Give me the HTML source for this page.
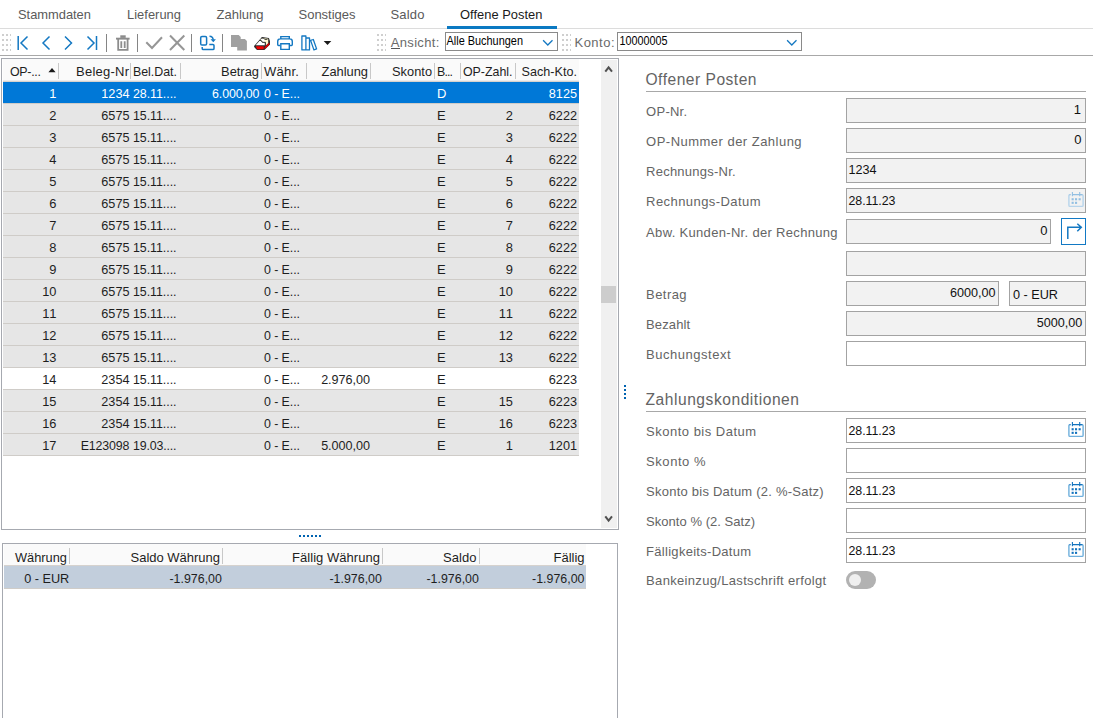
<!DOCTYPE html><html lang="de"><head><meta charset="utf-8"><title>Offene Posten</title><style>
html,body{margin:0;padding:0;background:#fff;}
body{width:1093px;height:718px;overflow:hidden;position:relative;font-family:"Liberation Sans", sans-serif;}
.a{position:absolute;display:block;}
.t{position:absolute;white-space:nowrap;line-height:20px;height:20px;}
</style></head><body>
<div class="a" style="left:0px;top:28px;width:1093px;height:1px;background:#dcdcdc;"></div>
<div class="a" style="left:447px;top:26px;width:110px;height:3px;background:#0b79c2;"></div>
<div class="a" style="left:0px;top:55px;width:1093px;height:1px;background:#a8a8a8;"></div>
<svg class="a" style="left:0;top:29px" width="1093" height="26" viewBox="0 29 1093 26"><rect x="2" y="34" width="2" height="2" fill="#cfcfcf"/><rect x="6" y="34" width="2" height="2" fill="#cfcfcf"/><rect x="10" y="34" width="1" height="2" fill="#cfcfcf"/><rect x="2" y="39" width="2" height="2" fill="#cfcfcf"/><rect x="6" y="39" width="2" height="2" fill="#cfcfcf"/><rect x="10" y="39" width="1" height="2" fill="#cfcfcf"/><rect x="2" y="44" width="2" height="2" fill="#cfcfcf"/><rect x="6" y="44" width="2" height="2" fill="#cfcfcf"/><rect x="10" y="44" width="1" height="2" fill="#cfcfcf"/><rect x="2" y="49" width="2" height="2" fill="#cfcfcf"/><rect x="6" y="49" width="2" height="2" fill="#cfcfcf"/><rect x="10" y="49" width="1" height="2" fill="#cfcfcf"/><rect x="377" y="34" width="2" height="2" fill="#cfcfcf"/><rect x="381" y="34" width="2" height="2" fill="#cfcfcf"/><rect x="385" y="34" width="1" height="2" fill="#cfcfcf"/><rect x="377" y="39" width="2" height="2" fill="#cfcfcf"/><rect x="381" y="39" width="2" height="2" fill="#cfcfcf"/><rect x="385" y="39" width="1" height="2" fill="#cfcfcf"/><rect x="377" y="44" width="2" height="2" fill="#cfcfcf"/><rect x="381" y="44" width="2" height="2" fill="#cfcfcf"/><rect x="385" y="44" width="1" height="2" fill="#cfcfcf"/><rect x="377" y="49" width="2" height="2" fill="#cfcfcf"/><rect x="381" y="49" width="2" height="2" fill="#cfcfcf"/><rect x="385" y="49" width="1" height="2" fill="#cfcfcf"/><rect x="562" y="34" width="2" height="2" fill="#cfcfcf"/><rect x="566" y="34" width="2" height="2" fill="#cfcfcf"/><rect x="570" y="34" width="1" height="2" fill="#cfcfcf"/><rect x="562" y="39" width="2" height="2" fill="#cfcfcf"/><rect x="566" y="39" width="2" height="2" fill="#cfcfcf"/><rect x="570" y="39" width="1" height="2" fill="#cfcfcf"/><rect x="562" y="44" width="2" height="2" fill="#cfcfcf"/><rect x="566" y="44" width="2" height="2" fill="#cfcfcf"/><rect x="570" y="44" width="1" height="2" fill="#cfcfcf"/><rect x="562" y="49" width="2" height="2" fill="#cfcfcf"/><rect x="566" y="49" width="2" height="2" fill="#cfcfcf"/><rect x="570" y="49" width="1" height="2" fill="#cfcfcf"/><path d="M18.2 36V50 M27.5 36.5L21 43L27.5 49.5" stroke="#1478c2" stroke-width="1.5" fill="none"/><path d="M49.5 36.5L43 43L49.5 49.5" stroke="#1478c2" stroke-width="1.5" fill="none"/><path d="M65 36.5L71.5 43L65 49.5" stroke="#1478c2" stroke-width="1.5" fill="none"/><path d="M87.5 36.5L94 43L87.5 49.5 M96.5 36V50" stroke="#1478c2" stroke-width="1.5" fill="none"/><rect x="106" y="34" width="1" height="18" fill="#858585"/><rect x="137" y="34" width="1" height="18" fill="#858585"/><rect x="191" y="34" width="1" height="18" fill="#858585"/><rect x="222" y="34" width="1" height="18" fill="#858585"/><rect x="116" y="37.7" width="13.6" height="1.9" fill="#8c8c8c"/><rect x="120.3" y="35.3" width="5.4" height="2.6" fill="#8c8c8c"/><path d="M118.2 39V49.8H127.6V39 M121.3 41.2V48 M124.7 41.2V48" stroke="#8c8c8c" stroke-width="1.8" fill="none"/><path d="M146.3 42.3L152 48L162 37.3" stroke="#969696" stroke-width="2" fill="none"/><path d="M170 35.5L184.3 50 M184.3 35.5L170 50" stroke="#969696" stroke-width="2" fill="none"/><rect x="200.7" y="36.4" width="5.9" height="8.6" rx="1.3" stroke="#1478c2" stroke-width="1.5" fill="none"/><path d="M202.2 47V48.5Q202.2 49.6 203.3 49.6H212.9Q214 49.6 214 48.5V45.5Q214 44.4 212.9 44.4H209.3 M209.5 36.2Q213 36.3 213.2 39.8" stroke="#1478c2" stroke-width="1.5" fill="none"/><path d="M210.5 39.3H215.9L213.3 42.2Z" fill="#1478c2"/><path d="M231 35H238.7L240.7 37V47H231Z" fill="#a0a0a0"/><path d="M237.2 39H244.9L246.9 41V50.6H237.2Z" fill="#a0a0a0"/><path d="M254.1 46L262 36.9L268.9 38L270 41.3V44.6L264.4 50H257L254.1 47Z" fill="#2b2b2b"/><path d="M262.2 37.9L268.2 38.8V43.2L265.7 45.4V42.3H262.7L261.3 40.5L259.9 40.3Z" fill="#fff8cc"/><path d="M260.6 39.6L261.6 38.5L263.7 38.7L264.6 39.9V41.9H263L261.6 40.1Z" fill="#ffffff"/><path d="M255.7 45.3L259.6 40.8L261 41L262.4 42.7H264.9V45.3Z" fill="#ffffff"/><path d="M261.1 38.2H263.8L264.8 39.5H267.4" stroke="#2b2b2b" stroke-width="0.8" fill="none"/><path d="M259.4 40.4L261.2 40.5L262.6 42.3H265.3V45.4" stroke="#2b2b2b" stroke-width="0.8" fill="none"/><path d="M255.8 46.2H263.7V49.2H257.2Z" fill="#f40000"/><path d="M264.7 46.9L269.3 42.6V44.7L264.7 49.3Z" fill="#e00000"/><path d="M280.8 38.9V36.6H289.3V38.9 M280 45.5H278.6Q277.7 45.5 277.7 44.6V41.5Q277.7 38.9 280.3 38.9H289.7Q292.3 38.9 292.3 41.5V44.6Q292.3 45.5 291.4 45.5H290 M280.8 43.8H289.3V49.4H280.8Z" stroke="#1478c2" stroke-width="1.4" fill="none"/><path d="M301.9 36H305.9V49.9H301.9Z M305.9 38H309.5V49.9H305.9 M310.6 40.4L313.3 39.5L316.6 48.9L313.9 49.9Z" stroke="#1478c2" stroke-width="1.3" stroke-linejoin="round" fill="none"/><path d="M323.7 40.9H331.3L327.5 45Z" fill="#1a1a1a"/></svg>
<div class="a" style="left:391px;top:48px;width:9px;height:1px;background:#555;"></div>
<div class="a" style="left:445px;top:32px;width:113px;height:19px;background:#fff;border:1px solid #8a8a8a;box-sizing:border-box;"></div>
<svg class="a" style="left:541px;top:38px" width="14" height="10"><path d="M2.1 2.3L6.8 7L11.5 2.3" stroke="#1478c2" stroke-width="1.3" fill="none"/></svg>
<div class="a" style="left:617px;top:32px;width:185px;height:19px;background:#fff;border:1px solid #8a8a8a;box-sizing:border-box;"></div>
<svg class="a" style="left:785.4px;top:38px" width="14" height="10"><path d="M2.1 2.3L6.8 7L11.5 2.3" stroke="#1478c2" stroke-width="1.3" fill="none"/></svg>
<div class="a" style="left:1px;top:58px;width:618px;height:472px;background:#fff;border:1px solid #a6a9b0;box-sizing:border-box;"></div>
<div class="a" style="left:3px;top:59px;width:576px;height:21px;background:#fafafa;"></div>
<div class="a" style="left:3px;top:80px;width:576px;height:1px;background:#ececec;"></div>
<div class="a" style="left:3px;top:81px;width:576px;height:1px;background:#d6d2ce;"></div>
<div class="a" style="left:601px;top:60px;width:16px;height:468px;background:#f0f0f0;"></div>
<div class="a" style="left:601px;top:286px;width:15px;height:17px;background:#cdcdcd;"></div>
<svg class="a" style="left:601px;top:60px" width="16" height="17"><path d="M4.3 11.6L7.6 7.3L11 11.6" stroke="#505050" stroke-width="2" fill="none"/></svg>
<svg class="a" style="left:601px;top:511px" width="16" height="17"><path d="M4.3 5.4L7.6 9.7L11 5.4" stroke="#505050" stroke-width="2" fill="none"/></svg>
<div class="a" style="left:58px;top:63px;width:1px;height:16px;background:#c8c8c8;"></div>
<div class="a" style="left:130px;top:63px;width:1px;height:16px;background:#c8c8c8;"></div>
<div class="a" style="left:180px;top:63px;width:1px;height:16px;background:#c8c8c8;"></div>
<div class="a" style="left:261px;top:63px;width:1px;height:16px;background:#c8c8c8;"></div>
<div class="a" style="left:306px;top:63px;width:1px;height:16px;background:#c8c8c8;"></div>
<div class="a" style="left:370px;top:63px;width:1px;height:16px;background:#c8c8c8;"></div>
<div class="a" style="left:434px;top:63px;width:1px;height:16px;background:#c8c8c8;"></div>
<div class="a" style="left:460px;top:63px;width:1px;height:16px;background:#c8c8c8;"></div>
<div class="a" style="left:515px;top:63px;width:1px;height:16px;background:#c8c8c8;"></div>
<svg class="a" style="left:45.6px;top:66.4px" width="12" height="8"><path d="M2.4 6.2L6 2L9.6 6.2Z" fill="#1a1a1a"/></svg>
<div class="a" style="left:3px;top:82px;width:576px;height:22px;background:#0078d7;"></div>
<div class="a" style="left:3px;top:103px;width:576px;height:1px;background:#cfccc8;"></div>
<div class="a" style="left:3px;top:104px;width:576px;height:22px;background:#e6e6e6;"></div>
<div class="a" style="left:3px;top:125px;width:576px;height:1px;background:#cfccc8;"></div>
<div class="a" style="left:3px;top:126px;width:576px;height:22px;background:#e6e6e6;"></div>
<div class="a" style="left:3px;top:147px;width:576px;height:1px;background:#cfccc8;"></div>
<div class="a" style="left:3px;top:148px;width:576px;height:22px;background:#e6e6e6;"></div>
<div class="a" style="left:3px;top:169px;width:576px;height:1px;background:#cfccc8;"></div>
<div class="a" style="left:3px;top:170px;width:576px;height:22px;background:#e6e6e6;"></div>
<div class="a" style="left:3px;top:191px;width:576px;height:1px;background:#cfccc8;"></div>
<div class="a" style="left:3px;top:192px;width:576px;height:22px;background:#e6e6e6;"></div>
<div class="a" style="left:3px;top:213px;width:576px;height:1px;background:#cfccc8;"></div>
<div class="a" style="left:3px;top:214px;width:576px;height:22px;background:#e6e6e6;"></div>
<div class="a" style="left:3px;top:235px;width:576px;height:1px;background:#cfccc8;"></div>
<div class="a" style="left:3px;top:236px;width:576px;height:22px;background:#e6e6e6;"></div>
<div class="a" style="left:3px;top:257px;width:576px;height:1px;background:#cfccc8;"></div>
<div class="a" style="left:3px;top:258px;width:576px;height:22px;background:#e6e6e6;"></div>
<div class="a" style="left:3px;top:279px;width:576px;height:1px;background:#cfccc8;"></div>
<div class="a" style="left:3px;top:280px;width:576px;height:22px;background:#e6e6e6;"></div>
<div class="a" style="left:3px;top:301px;width:576px;height:1px;background:#cfccc8;"></div>
<div class="a" style="left:3px;top:302px;width:576px;height:22px;background:#e6e6e6;"></div>
<div class="a" style="left:3px;top:323px;width:576px;height:1px;background:#cfccc8;"></div>
<div class="a" style="left:3px;top:324px;width:576px;height:22px;background:#e6e6e6;"></div>
<div class="a" style="left:3px;top:345px;width:576px;height:1px;background:#cfccc8;"></div>
<div class="a" style="left:3px;top:346px;width:576px;height:22px;background:#e6e6e6;"></div>
<div class="a" style="left:3px;top:367px;width:576px;height:1px;background:#cfccc8;"></div>
<div class="a" style="left:3px;top:368px;width:576px;height:22px;background:#ffffff;"></div>
<div class="a" style="left:3px;top:389px;width:576px;height:1px;background:#cfccc8;"></div>
<div class="a" style="left:3px;top:390px;width:576px;height:22px;background:#e6e6e6;"></div>
<div class="a" style="left:3px;top:411px;width:576px;height:1px;background:#cfccc8;"></div>
<div class="a" style="left:3px;top:412px;width:576px;height:22px;background:#e6e6e6;"></div>
<div class="a" style="left:3px;top:433px;width:576px;height:1px;background:#cfccc8;"></div>
<div class="a" style="left:3px;top:434px;width:576px;height:22px;background:#e6e6e6;"></div>
<div class="a" style="left:3px;top:455px;width:576px;height:1px;background:#cfccc8;"></div>
<svg class="a" style="left:298px;top:534px" width="26" height="4"><rect x="1" y="1" width="2" height="2" fill="#0063b1"/><rect x="5" y="1" width="2" height="2" fill="#0063b1"/><rect x="9" y="1" width="2" height="2" fill="#0063b1"/><rect x="13" y="1" width="2" height="2" fill="#0063b1"/><rect x="17" y="1" width="2" height="2" fill="#0063b1"/><rect x="21" y="1" width="2" height="2" fill="#0063b1"/></svg>
<svg class="a" style="left:623px;top:384px" width="4" height="16"><rect x="1" y="1" width="2" height="2" fill="#0063b1"/><rect x="1" y="5" width="2" height="2" fill="#0063b1"/><rect x="1" y="9" width="2" height="2" fill="#0063b1"/><rect x="1" y="13" width="2" height="2" fill="#0063b1"/></svg>
<div class="a" style="left:2px;top:543px;width:616px;height:175px;background:#fff;border:1px solid #a6a9b0;box-sizing:border-box;border-bottom:none;"></div>
<div class="a" style="left:4px;top:544px;width:582px;height:21px;background:#fafafa;"></div>
<div class="a" style="left:4px;top:565px;width:582px;height:1px;background:#d6d2ce;"></div>
<div class="a" style="left:69px;top:548px;width:1px;height:16px;background:#c8c8c8;"></div>
<div class="a" style="left:222px;top:548px;width:1px;height:16px;background:#c8c8c8;"></div>
<div class="a" style="left:382px;top:548px;width:1px;height:16px;background:#c8c8c8;"></div>
<div class="a" style="left:479px;top:548px;width:1px;height:16px;background:#c8c8c8;"></div>
<div class="a" style="left:4px;top:566px;width:582px;height:22px;background:#c2cedc;"></div>
<div class="a" style="left:4px;top:588px;width:582px;height:1px;background:#cfccc8;"></div>
<div class="a" style="left:646px;top:91px;width:440px;height:1px;background:#a8a8a8;"></div>
<div class="a" style="left:646px;top:411px;width:440px;height:1px;background:#a8a8a8;"></div>
<div class="a" style="left:846px;top:98px;width:240px;height:25px;background:#f2f2f2;border:1px solid #a3a3a3;box-sizing:border-box;"></div>
<div class="a" style="left:846px;top:128px;width:240px;height:25px;background:#f2f2f2;border:1px solid #a3a3a3;box-sizing:border-box;"></div>
<div class="a" style="left:846px;top:158px;width:240px;height:25px;background:#f2f2f2;border:1px solid #a3a3a3;box-sizing:border-box;"></div>
<div class="a" style="left:846px;top:188px;width:240px;height:25px;background:#f2f2f2;border:1px solid #a3a3a3;box-sizing:border-box;"></div>
<div class="a" style="left:846px;top:219px;width:205px;height:25px;background:#f2f2f2;border:1px solid #a3a3a3;box-sizing:border-box;"></div>
<div class="a" style="left:846px;top:251px;width:240px;height:25px;background:#f2f2f2;border:1px solid #a3a3a3;box-sizing:border-box;"></div>
<div class="a" style="left:846px;top:281px;width:153px;height:25px;background:#f2f2f2;border:1px solid #a3a3a3;box-sizing:border-box;"></div>
<div class="a" style="left:1009px;top:281px;width:77px;height:25px;background:#f2f2f2;border:1px solid #a3a3a3;box-sizing:border-box;"></div>
<div class="a" style="left:846px;top:311px;width:240px;height:25px;background:#f2f2f2;border:1px solid #a3a3a3;box-sizing:border-box;"></div>
<div class="a" style="left:846px;top:341px;width:240px;height:25px;background:#ffffff;border:1px solid #a3a3a3;box-sizing:border-box;"></div>
<div class="a" style="left:846px;top:418px;width:240px;height:25px;background:#ffffff;border:1px solid #a3a3a3;box-sizing:border-box;"></div>
<div class="a" style="left:846px;top:448px;width:240px;height:25px;background:#ffffff;border:1px solid #a3a3a3;box-sizing:border-box;"></div>
<div class="a" style="left:846px;top:478px;width:240px;height:25px;background:#ffffff;border:1px solid #a3a3a3;box-sizing:border-box;"></div>
<div class="a" style="left:846px;top:508px;width:240px;height:25px;background:#ffffff;border:1px solid #a3a3a3;box-sizing:border-box;"></div>
<div class="a" style="left:846px;top:538px;width:240px;height:25px;background:#ffffff;border:1px solid #a3a3a3;box-sizing:border-box;"></div>
<div class="a" style="left:1061px;top:218px;width:25px;height:27px;background:#fff;border:1px solid #1279c4;box-sizing:border-box;"></div>
<svg class="a" style="left:1061px;top:218px" width="25" height="27"><path d="M6.8 21V9.3H20 M16.3 5.7L20.3 9.3L16.3 13.2" stroke="#1478c2" stroke-width="1.5" fill="none"/></svg>
<svg class="a" style="left:1067px;top:191px" width="18" height="17"><path d="M3.5 3.6H3Q1.9 3.6 1.9 4.8V14.2Q1.9 15.4 3 15.4H15Q16.1 15.4 16.1 14.2V4.8Q16.1 3.6 15 3.6H13" stroke="#b6d4eb" stroke-width="1.4" fill="none"/><path d="M5.4 1V5.2 M12.7 1V5.2 M5.4 3.6H12.2 M2.6 3.6H3.6 M12.7 3.6H15.4" stroke="#92bfe2" stroke-width="1.1" fill="none"/><rect x="4.6" y="7.2" width="2.1" height="2.1" fill="#92bfe2"/><rect x="8" y="7.2" width="2.1" height="2.1" fill="#92bfe2"/><rect x="11.6" y="7.2" width="2.1" height="2.1" fill="#92bfe2"/><rect x="4.6" y="10.8" width="2.1" height="2.1" fill="#92bfe2"/><rect x="8" y="10.8" width="2.1" height="2.1" fill="#92bfe2"/></svg>
<svg class="a" style="left:1067px;top:421px" width="18" height="17"><path d="M3.5 3.6H3Q1.9 3.6 1.9 4.8V14.2Q1.9 15.4 3 15.4H15Q16.1 15.4 16.1 14.2V4.8Q16.1 3.6 15 3.6H13" stroke="#6fb0dd" stroke-width="1.4" fill="none"/><path d="M5.4 1V5.2 M12.7 1V5.2 M5.4 3.6H12.2 M2.6 3.6H3.6 M12.7 3.6H15.4" stroke="#1373be" stroke-width="1.1" fill="none"/><rect x="4.6" y="7.2" width="2.1" height="2.1" fill="#1373be"/><rect x="8" y="7.2" width="2.1" height="2.1" fill="#1373be"/><rect x="11.6" y="7.2" width="2.1" height="2.1" fill="#1373be"/><rect x="4.6" y="10.8" width="2.1" height="2.1" fill="#1373be"/><rect x="8" y="10.8" width="2.1" height="2.1" fill="#1373be"/></svg>
<svg class="a" style="left:1067px;top:481px" width="18" height="17"><path d="M3.5 3.6H3Q1.9 3.6 1.9 4.8V14.2Q1.9 15.4 3 15.4H15Q16.1 15.4 16.1 14.2V4.8Q16.1 3.6 15 3.6H13" stroke="#6fb0dd" stroke-width="1.4" fill="none"/><path d="M5.4 1V5.2 M12.7 1V5.2 M5.4 3.6H12.2 M2.6 3.6H3.6 M12.7 3.6H15.4" stroke="#1373be" stroke-width="1.1" fill="none"/><rect x="4.6" y="7.2" width="2.1" height="2.1" fill="#1373be"/><rect x="8" y="7.2" width="2.1" height="2.1" fill="#1373be"/><rect x="11.6" y="7.2" width="2.1" height="2.1" fill="#1373be"/><rect x="4.6" y="10.8" width="2.1" height="2.1" fill="#1373be"/><rect x="8" y="10.8" width="2.1" height="2.1" fill="#1373be"/></svg>
<svg class="a" style="left:1067px;top:541px" width="18" height="17"><path d="M3.5 3.6H3Q1.9 3.6 1.9 4.8V14.2Q1.9 15.4 3 15.4H15Q16.1 15.4 16.1 14.2V4.8Q16.1 3.6 15 3.6H13" stroke="#6fb0dd" stroke-width="1.4" fill="none"/><path d="M5.4 1V5.2 M12.7 1V5.2 M5.4 3.6H12.2 M2.6 3.6H3.6 M12.7 3.6H15.4" stroke="#1373be" stroke-width="1.1" fill="none"/><rect x="4.6" y="7.2" width="2.1" height="2.1" fill="#1373be"/><rect x="8" y="7.2" width="2.1" height="2.1" fill="#1373be"/><rect x="11.6" y="7.2" width="2.1" height="2.1" fill="#1373be"/><rect x="4.6" y="10.8" width="2.1" height="2.1" fill="#1373be"/><rect x="8" y="10.8" width="2.1" height="2.1" fill="#1373be"/></svg>
<div class="a" style="left:846px;top:571px;width:30px;height:18px;background:#b2b2b2;border-radius:9px;"></div>
<div class="a" style="left:849px;top:574px;width:12px;height:12px;background:#efefef;border-radius:6px;"></div>
<span class="t" id="t0" style="top:5.00px;font-size:12.9px;color:#5a5a5a;letter-spacing:-0.015px;left:18.00px;">Stammdaten</span>
<span class="t" id="t1" style="top:5.00px;font-size:12.9px;color:#5a5a5a;letter-spacing:0.025px;left:127.00px;">Lieferung</span>
<span class="t" id="t2" style="top:5.00px;font-size:13.0px;color:#5a5a5a;letter-spacing:0.003px;left:216.50px;">Zahlung</span>
<span class="t" id="t3" style="top:5.00px;font-size:13.0px;color:#5a5a5a;letter-spacing:-0.012px;left:298.50px;">Sonstiges</span>
<span class="t" id="t4" style="top:5.00px;font-size:13.0px;color:#5a5a5a;letter-spacing:0.188px;left:390.50px;">Saldo</span>
<span class="t" id="t5" style="top:5.00px;font-size:12.9px;color:#1a1a1a;letter-spacing:0.022px;left:460.00px;">Offene Posten</span>
<span class="t" id="t6" style="top:33.00px;font-size:13.0px;color:#6a6a6a;letter-spacing:0.321px;left:390.80px;">Ansicht:</span>
<span class="t" id="t7" style="top:33.00px;font-size:13.0px;color:#6a6a6a;letter-spacing:0.481px;left:574.50px;">Konto:</span>
<span class="t" id="t8" style="top:31.00px;font-size:10.9px;color:#000;letter-spacing:0.011px;left:446.50px;transform:scaleY(1.12);transform-origin:0 14px;">Alle Buchungen</span>
<span class="t" id="t9" style="top:31.00px;font-size:10.8px;color:#000;letter-spacing:-0.009px;left:619.50px;transform:scaleY(1.12);transform-origin:0 14px;">10000005</span>
<span class="t" id="t10" style="top:62.00px;font-size:12.4px;color:#1e1e1e;letter-spacing:-0.277px;left:10.00px;">OP-...</span>
<span class="t" id="t11" style="top:62.00px;font-size:13.0px;color:#1e1e1e;letter-spacing:0.243px;right:963.76px;">Beleg-Nr</span>
<span class="t" id="t12" style="top:62.00px;font-size:12.4px;color:#1e1e1e;letter-spacing:-0.016px;left:133.00px;">Bel.Dat.</span>
<span class="t" id="t13" style="top:62.00px;font-size:12.9px;color:#1e1e1e;letter-spacing:-0.004px;right:834.00px;">Betrag</span>
<span class="t" id="t14" style="top:62.00px;font-size:13.0px;color:#1e1e1e;letter-spacing:0.258px;left:264.00px;">Währ.</span>
<span class="t" id="t15" style="top:62.00px;font-size:12.9px;color:#1e1e1e;letter-spacing:-0.020px;right:725.02px;">Zahlung</span>
<span class="t" id="t16" style="top:62.00px;font-size:12.8px;color:#1e1e1e;letter-spacing:0.028px;right:660.97px;">Skonto</span>
<span class="t" id="t17" style="top:62.00px;font-size:12.4px;color:#1e1e1e;letter-spacing:-0.872px;left:437.00px;">B...</span>
<span class="t" id="t18" style="top:62.00px;font-size:12.4px;color:#1e1e1e;letter-spacing:-0.016px;left:463.00px;">OP-Zahl.</span>
<span class="t" id="t19" style="top:62.00px;font-size:12.6px;color:#1e1e1e;letter-spacing:0.020px;left:521.50px;">Sach-Kto.</span>
<span class="t" id="t20" style="top:84.00px;font-size:12.9px;color:#ffffff;right:1036.50px;">1</span>
<span class="t" id="t21" style="top:84.00px;font-size:12.7px;color:#ffffff;letter-spacing:-0.018px;right:963.52px;">1234</span>
<span class="t" id="t22" style="top:84.00px;font-size:12.4px;color:#ffffff;letter-spacing:-0.049px;left:133.00px;">28.11....</span>
<span class="t" id="t23" style="top:84.00px;font-size:12.4px;color:#ffffff;letter-spacing:-0.111px;right:833.61px;">6.000,00</span>
<span class="t" id="t24" style="top:84.00px;font-size:12.4px;color:#ffffff;letter-spacing:-0.076px;left:264.00px;">0 - E...</span>
<span class="t" id="t25" style="top:84.00px;font-size:13px;color:#ffffff;left:437.00px;">D</span>
<span class="t" id="t26" style="top:84.00px;font-size:12.7px;color:#ffffff;letter-spacing:-0.018px;right:516.02px;">8125</span>
<span class="t" id="t27" style="top:106.00px;font-size:12.9px;color:#1e1e1e;right:1036.50px;">2</span>
<span class="t" id="t28" style="top:106.00px;font-size:12.7px;color:#1e1e1e;letter-spacing:-0.018px;right:963.52px;">6575</span>
<span class="t" id="t29" style="top:106.00px;font-size:12.4px;color:#1e1e1e;letter-spacing:-0.049px;left:133.00px;">15.11....</span>
<span class="t" id="t30" style="top:106.00px;font-size:12.4px;color:#1e1e1e;letter-spacing:-0.076px;left:264.00px;">0 - E...</span>
<span class="t" id="t31" style="top:106.00px;font-size:13px;color:#1e1e1e;left:437.00px;">E</span>
<span class="t" id="t32" style="top:106.00px;font-size:12.9px;color:#1e1e1e;right:580.00px;">2</span>
<span class="t" id="t33" style="top:106.00px;font-size:12.7px;color:#1e1e1e;letter-spacing:-0.018px;right:516.02px;">6222</span>
<span class="t" id="t34" style="top:128.00px;font-size:12.9px;color:#1e1e1e;right:1036.50px;">3</span>
<span class="t" id="t35" style="top:128.00px;font-size:12.7px;color:#1e1e1e;letter-spacing:-0.018px;right:963.52px;">6575</span>
<span class="t" id="t36" style="top:128.00px;font-size:12.4px;color:#1e1e1e;letter-spacing:-0.049px;left:133.00px;">15.11....</span>
<span class="t" id="t37" style="top:128.00px;font-size:12.4px;color:#1e1e1e;letter-spacing:-0.076px;left:264.00px;">0 - E...</span>
<span class="t" id="t38" style="top:128.00px;font-size:13px;color:#1e1e1e;left:437.00px;">E</span>
<span class="t" id="t39" style="top:128.00px;font-size:12.9px;color:#1e1e1e;right:580.00px;">3</span>
<span class="t" id="t40" style="top:128.00px;font-size:12.7px;color:#1e1e1e;letter-spacing:-0.018px;right:516.02px;">6222</span>
<span class="t" id="t41" style="top:150.00px;font-size:12.9px;color:#1e1e1e;right:1036.50px;">4</span>
<span class="t" id="t42" style="top:150.00px;font-size:12.7px;color:#1e1e1e;letter-spacing:-0.018px;right:963.52px;">6575</span>
<span class="t" id="t43" style="top:150.00px;font-size:12.4px;color:#1e1e1e;letter-spacing:-0.049px;left:133.00px;">15.11....</span>
<span class="t" id="t44" style="top:150.00px;font-size:12.4px;color:#1e1e1e;letter-spacing:-0.076px;left:264.00px;">0 - E...</span>
<span class="t" id="t45" style="top:150.00px;font-size:13px;color:#1e1e1e;left:437.00px;">E</span>
<span class="t" id="t46" style="top:150.00px;font-size:12.9px;color:#1e1e1e;right:580.00px;">4</span>
<span class="t" id="t47" style="top:150.00px;font-size:12.7px;color:#1e1e1e;letter-spacing:-0.018px;right:516.02px;">6222</span>
<span class="t" id="t48" style="top:172.00px;font-size:12.9px;color:#1e1e1e;right:1036.50px;">5</span>
<span class="t" id="t49" style="top:172.00px;font-size:12.7px;color:#1e1e1e;letter-spacing:-0.018px;right:963.52px;">6575</span>
<span class="t" id="t50" style="top:172.00px;font-size:12.4px;color:#1e1e1e;letter-spacing:-0.049px;left:133.00px;">15.11....</span>
<span class="t" id="t51" style="top:172.00px;font-size:12.4px;color:#1e1e1e;letter-spacing:-0.076px;left:264.00px;">0 - E...</span>
<span class="t" id="t52" style="top:172.00px;font-size:13px;color:#1e1e1e;left:437.00px;">E</span>
<span class="t" id="t53" style="top:172.00px;font-size:12.9px;color:#1e1e1e;right:580.00px;">5</span>
<span class="t" id="t54" style="top:172.00px;font-size:12.7px;color:#1e1e1e;letter-spacing:-0.018px;right:516.02px;">6222</span>
<span class="t" id="t55" style="top:194.00px;font-size:12.9px;color:#1e1e1e;right:1036.50px;">6</span>
<span class="t" id="t56" style="top:194.00px;font-size:12.7px;color:#1e1e1e;letter-spacing:-0.018px;right:963.52px;">6575</span>
<span class="t" id="t57" style="top:194.00px;font-size:12.4px;color:#1e1e1e;letter-spacing:-0.049px;left:133.00px;">15.11....</span>
<span class="t" id="t58" style="top:194.00px;font-size:12.4px;color:#1e1e1e;letter-spacing:-0.076px;left:264.00px;">0 - E...</span>
<span class="t" id="t59" style="top:194.00px;font-size:13px;color:#1e1e1e;left:437.00px;">E</span>
<span class="t" id="t60" style="top:194.00px;font-size:12.9px;color:#1e1e1e;right:580.00px;">6</span>
<span class="t" id="t61" style="top:194.00px;font-size:12.7px;color:#1e1e1e;letter-spacing:-0.018px;right:516.02px;">6222</span>
<span class="t" id="t62" style="top:216.00px;font-size:12.9px;color:#1e1e1e;right:1036.50px;">7</span>
<span class="t" id="t63" style="top:216.00px;font-size:12.7px;color:#1e1e1e;letter-spacing:-0.018px;right:963.52px;">6575</span>
<span class="t" id="t64" style="top:216.00px;font-size:12.4px;color:#1e1e1e;letter-spacing:-0.049px;left:133.00px;">15.11....</span>
<span class="t" id="t65" style="top:216.00px;font-size:12.4px;color:#1e1e1e;letter-spacing:-0.076px;left:264.00px;">0 - E...</span>
<span class="t" id="t66" style="top:216.00px;font-size:13px;color:#1e1e1e;left:437.00px;">E</span>
<span class="t" id="t67" style="top:216.00px;font-size:12.9px;color:#1e1e1e;right:580.00px;">7</span>
<span class="t" id="t68" style="top:216.00px;font-size:12.7px;color:#1e1e1e;letter-spacing:-0.018px;right:516.02px;">6222</span>
<span class="t" id="t69" style="top:238.00px;font-size:12.9px;color:#1e1e1e;right:1036.50px;">8</span>
<span class="t" id="t70" style="top:238.00px;font-size:12.7px;color:#1e1e1e;letter-spacing:-0.018px;right:963.52px;">6575</span>
<span class="t" id="t71" style="top:238.00px;font-size:12.4px;color:#1e1e1e;letter-spacing:-0.049px;left:133.00px;">15.11....</span>
<span class="t" id="t72" style="top:238.00px;font-size:12.4px;color:#1e1e1e;letter-spacing:-0.076px;left:264.00px;">0 - E...</span>
<span class="t" id="t73" style="top:238.00px;font-size:13px;color:#1e1e1e;left:437.00px;">E</span>
<span class="t" id="t74" style="top:238.00px;font-size:12.9px;color:#1e1e1e;right:580.00px;">8</span>
<span class="t" id="t75" style="top:238.00px;font-size:12.7px;color:#1e1e1e;letter-spacing:-0.018px;right:516.02px;">6222</span>
<span class="t" id="t76" style="top:260.00px;font-size:12.9px;color:#1e1e1e;right:1036.50px;">9</span>
<span class="t" id="t77" style="top:260.00px;font-size:12.7px;color:#1e1e1e;letter-spacing:-0.018px;right:963.52px;">6575</span>
<span class="t" id="t78" style="top:260.00px;font-size:12.4px;color:#1e1e1e;letter-spacing:-0.049px;left:133.00px;">15.11....</span>
<span class="t" id="t79" style="top:260.00px;font-size:12.4px;color:#1e1e1e;letter-spacing:-0.076px;left:264.00px;">0 - E...</span>
<span class="t" id="t80" style="top:260.00px;font-size:13px;color:#1e1e1e;left:437.00px;">E</span>
<span class="t" id="t81" style="top:260.00px;font-size:12.9px;color:#1e1e1e;right:580.00px;">9</span>
<span class="t" id="t82" style="top:260.00px;font-size:12.7px;color:#1e1e1e;letter-spacing:-0.018px;right:516.02px;">6222</span>
<span class="t" id="t83" style="top:282.00px;font-size:12.8px;color:#1e1e1e;letter-spacing:-0.046px;right:1036.55px;">10</span>
<span class="t" id="t84" style="top:282.00px;font-size:12.7px;color:#1e1e1e;letter-spacing:-0.018px;right:963.52px;">6575</span>
<span class="t" id="t85" style="top:282.00px;font-size:12.4px;color:#1e1e1e;letter-spacing:-0.049px;left:133.00px;">15.11....</span>
<span class="t" id="t86" style="top:282.00px;font-size:12.4px;color:#1e1e1e;letter-spacing:-0.076px;left:264.00px;">0 - E...</span>
<span class="t" id="t87" style="top:282.00px;font-size:13px;color:#1e1e1e;left:437.00px;">E</span>
<span class="t" id="t88" style="top:282.00px;font-size:12.8px;color:#1e1e1e;letter-spacing:-0.046px;right:580.05px;">10</span>
<span class="t" id="t89" style="top:282.00px;font-size:12.7px;color:#1e1e1e;letter-spacing:-0.018px;right:516.02px;">6222</span>
<span class="t" id="t90" style="top:304.00px;font-size:13.0px;color:#1e1e1e;letter-spacing:0.700px;right:1035.80px;">11</span>
<span class="t" id="t91" style="top:304.00px;font-size:12.7px;color:#1e1e1e;letter-spacing:-0.018px;right:963.52px;">6575</span>
<span class="t" id="t92" style="top:304.00px;font-size:12.4px;color:#1e1e1e;letter-spacing:-0.049px;left:133.00px;">15.11....</span>
<span class="t" id="t93" style="top:304.00px;font-size:12.4px;color:#1e1e1e;letter-spacing:-0.076px;left:264.00px;">0 - E...</span>
<span class="t" id="t94" style="top:304.00px;font-size:13px;color:#1e1e1e;left:437.00px;">E</span>
<span class="t" id="t95" style="top:304.00px;font-size:13.0px;color:#1e1e1e;letter-spacing:0.700px;right:579.30px;">11</span>
<span class="t" id="t96" style="top:304.00px;font-size:12.7px;color:#1e1e1e;letter-spacing:-0.018px;right:516.02px;">6222</span>
<span class="t" id="t97" style="top:326.00px;font-size:12.8px;color:#1e1e1e;letter-spacing:-0.046px;right:1036.55px;">12</span>
<span class="t" id="t98" style="top:326.00px;font-size:12.7px;color:#1e1e1e;letter-spacing:-0.018px;right:963.52px;">6575</span>
<span class="t" id="t99" style="top:326.00px;font-size:12.4px;color:#1e1e1e;letter-spacing:-0.049px;left:133.00px;">15.11....</span>
<span class="t" id="t100" style="top:326.00px;font-size:12.4px;color:#1e1e1e;letter-spacing:-0.076px;left:264.00px;">0 - E...</span>
<span class="t" id="t101" style="top:326.00px;font-size:13px;color:#1e1e1e;left:437.00px;">E</span>
<span class="t" id="t102" style="top:326.00px;font-size:12.8px;color:#1e1e1e;letter-spacing:-0.046px;right:580.05px;">12</span>
<span class="t" id="t103" style="top:326.00px;font-size:12.7px;color:#1e1e1e;letter-spacing:-0.018px;right:516.02px;">6222</span>
<span class="t" id="t104" style="top:348.00px;font-size:12.8px;color:#1e1e1e;letter-spacing:-0.046px;right:1036.55px;">13</span>
<span class="t" id="t105" style="top:348.00px;font-size:12.7px;color:#1e1e1e;letter-spacing:-0.018px;right:963.52px;">6575</span>
<span class="t" id="t106" style="top:348.00px;font-size:12.4px;color:#1e1e1e;letter-spacing:-0.049px;left:133.00px;">15.11....</span>
<span class="t" id="t107" style="top:348.00px;font-size:12.4px;color:#1e1e1e;letter-spacing:-0.076px;left:264.00px;">0 - E...</span>
<span class="t" id="t108" style="top:348.00px;font-size:13px;color:#1e1e1e;left:437.00px;">E</span>
<span class="t" id="t109" style="top:348.00px;font-size:12.8px;color:#1e1e1e;letter-spacing:-0.046px;right:580.05px;">13</span>
<span class="t" id="t110" style="top:348.00px;font-size:12.7px;color:#1e1e1e;letter-spacing:-0.018px;right:516.02px;">6222</span>
<span class="t" id="t111" style="top:370.00px;font-size:12.8px;color:#1e1e1e;letter-spacing:-0.046px;right:1036.55px;">14</span>
<span class="t" id="t112" style="top:370.00px;font-size:12.7px;color:#1e1e1e;letter-spacing:-0.018px;right:963.52px;">2354</span>
<span class="t" id="t113" style="top:370.00px;font-size:12.4px;color:#1e1e1e;letter-spacing:-0.049px;left:133.00px;">15.11....</span>
<span class="t" id="t114" style="top:370.00px;font-size:12.4px;color:#1e1e1e;letter-spacing:-0.076px;left:264.00px;">0 - E...</span>
<span class="t" id="t115" style="top:370.00px;font-size:12.6px;color:#1e1e1e;letter-spacing:-0.007px;right:722.91px;">2.976,00</span>
<span class="t" id="t116" style="top:370.00px;font-size:13px;color:#1e1e1e;left:437.00px;">E</span>
<span class="t" id="t117" style="top:370.00px;font-size:12.7px;color:#1e1e1e;letter-spacing:-0.018px;right:516.02px;">6223</span>
<span class="t" id="t118" style="top:392.00px;font-size:12.8px;color:#1e1e1e;letter-spacing:-0.046px;right:1036.55px;">15</span>
<span class="t" id="t119" style="top:392.00px;font-size:12.7px;color:#1e1e1e;letter-spacing:-0.018px;right:963.52px;">2354</span>
<span class="t" id="t120" style="top:392.00px;font-size:12.4px;color:#1e1e1e;letter-spacing:-0.049px;left:133.00px;">15.11....</span>
<span class="t" id="t121" style="top:392.00px;font-size:12.4px;color:#1e1e1e;letter-spacing:-0.076px;left:264.00px;">0 - E...</span>
<span class="t" id="t122" style="top:392.00px;font-size:13px;color:#1e1e1e;left:437.00px;">E</span>
<span class="t" id="t123" style="top:392.00px;font-size:12.8px;color:#1e1e1e;letter-spacing:-0.046px;right:580.05px;">15</span>
<span class="t" id="t124" style="top:392.00px;font-size:12.7px;color:#1e1e1e;letter-spacing:-0.018px;right:516.02px;">6223</span>
<span class="t" id="t125" style="top:414.00px;font-size:12.8px;color:#1e1e1e;letter-spacing:-0.046px;right:1036.55px;">16</span>
<span class="t" id="t126" style="top:414.00px;font-size:12.7px;color:#1e1e1e;letter-spacing:-0.018px;right:963.52px;">2354</span>
<span class="t" id="t127" style="top:414.00px;font-size:12.4px;color:#1e1e1e;letter-spacing:-0.049px;left:133.00px;">15.11....</span>
<span class="t" id="t128" style="top:414.00px;font-size:12.4px;color:#1e1e1e;letter-spacing:-0.076px;left:264.00px;">0 - E...</span>
<span class="t" id="t129" style="top:414.00px;font-size:13px;color:#1e1e1e;left:437.00px;">E</span>
<span class="t" id="t130" style="top:414.00px;font-size:12.8px;color:#1e1e1e;letter-spacing:-0.046px;right:580.05px;">16</span>
<span class="t" id="t131" style="top:414.00px;font-size:12.7px;color:#1e1e1e;letter-spacing:-0.018px;right:516.02px;">6223</span>
<span class="t" id="t132" style="top:436.00px;font-size:12.8px;color:#1e1e1e;letter-spacing:-0.046px;right:1036.55px;">17</span>
<span class="t" id="t133" style="top:436.00px;font-size:12.4px;color:#1e1e1e;letter-spacing:-0.143px;right:963.64px;">E123098</span>
<span class="t" id="t134" style="top:436.00px;font-size:12.4px;color:#1e1e1e;letter-spacing:-0.164px;left:133.00px;">19.03....</span>
<span class="t" id="t135" style="top:436.00px;font-size:12.4px;color:#1e1e1e;letter-spacing:-0.076px;left:264.00px;">0 - E...</span>
<span class="t" id="t136" style="top:436.00px;font-size:12.6px;color:#1e1e1e;letter-spacing:-0.007px;right:722.91px;">5.000,00</span>
<span class="t" id="t137" style="top:436.00px;font-size:13px;color:#1e1e1e;left:437.00px;">E</span>
<span class="t" id="t138" style="top:436.00px;font-size:12.9px;color:#1e1e1e;right:580.00px;">1</span>
<span class="t" id="t139" style="top:436.00px;font-size:12.7px;color:#1e1e1e;letter-spacing:-0.018px;right:516.02px;">1201</span>
<span class="t" id="t140" style="top:548.00px;font-size:12.8px;color:#1e1e1e;letter-spacing:0.010px;left:15.00px;">Währung</span>
<span class="t" id="t141" style="top:548.00px;font-size:13.0px;color:#1e1e1e;letter-spacing:-0.010px;right:873.01px;">Saldo Währung</span>
<span class="t" id="t142" style="top:548.00px;font-size:13.0px;color:#1e1e1e;letter-spacing:0.043px;right:712.96px;">Fällig Währung</span>
<span class="t" id="t143" style="top:548.00px;font-size:13.0px;color:#1e1e1e;letter-spacing:0.062px;right:616.44px;">Saldo</span>
<span class="t" id="t144" style="top:548.00px;font-size:13.0px;color:#1e1e1e;letter-spacing:-0.016px;right:508.52px;">Fällig</span>
<span class="t" id="t145" style="top:569.00px;font-size:12.7px;color:#1e1e1e;letter-spacing:-0.028px;left:24.30px;">0 - EUR</span>
<span class="t" id="t146" style="top:569.00px;font-size:12.4px;color:#1e1e1e;letter-spacing:0.012px;right:871.09px;">-1.976,00</span>
<span class="t" id="t147" style="top:569.00px;font-size:12.4px;color:#1e1e1e;letter-spacing:0.012px;right:711.09px;">-1.976,00</span>
<span class="t" id="t148" style="top:569.00px;font-size:12.4px;color:#1e1e1e;letter-spacing:0.012px;right:614.09px;">-1.976,00</span>
<span class="t" id="t149" style="top:569.00px;font-size:12.4px;color:#1e1e1e;letter-spacing:0.012px;right:508.49px;">-1.976,00</span>
<span class="t" id="t150" style="top:70.00px;font-size:15.6px;color:#646464;letter-spacing:0.492px;left:645.50px;">Offener Posten</span>
<span class="t" id="t151" style="top:390.00px;font-size:15.6px;color:#646464;letter-spacing:0.532px;left:645.50px;">Zahlungskonditionen</span>
<span class="t" id="t152" style="top:102.00px;font-size:13.0px;color:#646464;letter-spacing:0.253px;left:646.10px;">OP-Nr.</span>
<span class="t" id="t153" style="top:132.00px;font-size:13.0px;color:#646464;letter-spacing:0.477px;left:646.10px;">OP-Nummer der Zahlung</span>
<span class="t" id="t154" style="top:162.00px;font-size:13.0px;color:#646464;letter-spacing:0.232px;left:646.10px;">Rechnungs-Nr.</span>
<span class="t" id="t155" style="top:192.00px;font-size:13.0px;color:#646464;letter-spacing:0.436px;left:646.10px;">Rechnungs-Datum</span>
<span class="t" id="t156" style="top:223.00px;font-size:13.0px;color:#646464;letter-spacing:0.321px;left:646.10px;">Abw. Kunden-Nr. der Rechnung</span>
<span class="t" id="t157" style="top:285.00px;font-size:13.0px;color:#646464;letter-spacing:0.438px;left:646.10px;">Betrag</span>
<span class="t" id="t158" style="top:315.00px;font-size:13.0px;color:#646464;letter-spacing:0.104px;left:646.10px;">Bezahlt</span>
<span class="t" id="t159" style="top:345.00px;font-size:13.0px;color:#646464;letter-spacing:0.520px;left:646.10px;">Buchungstext</span>
<span class="t" id="t160" style="top:422.00px;font-size:13.0px;color:#646464;letter-spacing:0.493px;left:646.10px;">Skonto bis Datum</span>
<span class="t" id="t161" style="top:452.00px;font-size:13.0px;color:#646464;letter-spacing:0.549px;left:646.10px;">Skonto %</span>
<span class="t" id="t162" style="top:482.00px;font-size:13.0px;color:#646464;letter-spacing:0.232px;left:646.10px;">Skonto bis Datum (2. %-Satz)</span>
<span class="t" id="t163" style="top:512.00px;font-size:13.0px;color:#646464;letter-spacing:0.036px;left:646.10px;">Skonto % (2. Satz)</span>
<span class="t" id="t164" style="top:542.00px;font-size:13.0px;color:#646464;letter-spacing:0.286px;left:646.10px;">Fälligkeits-Datum</span>
<span class="t" id="t165" style="top:571.00px;font-size:13.0px;color:#646464;letter-spacing:0.326px;left:646.10px;">Bankeinzug/Lastschrift erfolgt</span>
<span class="t" id="t166" style="top:100.00px;font-size:13px;color:#111;right:12.00px;">1</span>
<span class="t" id="t167" style="top:130.00px;font-size:13px;color:#111;right:11.50px;">0</span>
<span class="t" id="t168" style="top:160.00px;font-size:12.6px;color:#111;letter-spacing:-0.011px;left:848.50px;">1234</span>
<span class="t" id="t169" style="top:191.00px;font-size:12.4px;color:#111;letter-spacing:-0.050px;left:848.50px;">28.11.23</span>
<span class="t" id="t170" style="top:221.00px;font-size:13px;color:#111;right:45.50px;">0</span>
<span class="t" id="t171" style="top:283.00px;font-size:12.6px;color:#111;letter-spacing:-0.009px;right:97.51px;">6000,00</span>
<span class="t" id="t172" style="top:285.00px;font-size:12.7px;color:#111;letter-spacing:-0.028px;left:1013.00px;">0 - EUR</span>
<span class="t" id="t173" style="top:313.00px;font-size:12.6px;color:#111;letter-spacing:-0.009px;right:10.71px;">5000,00</span>
<span class="t" id="t174" style="top:421.00px;font-size:12.4px;color:#111;letter-spacing:-0.050px;left:848.50px;">28.11.23</span>
<span class="t" id="t175" style="top:481.00px;font-size:12.4px;color:#111;letter-spacing:-0.050px;left:848.50px;">28.11.23</span>
<span class="t" id="t176" style="top:541.00px;font-size:12.4px;color:#111;letter-spacing:-0.050px;left:848.50px;">28.11.23</span>
</body></html>
